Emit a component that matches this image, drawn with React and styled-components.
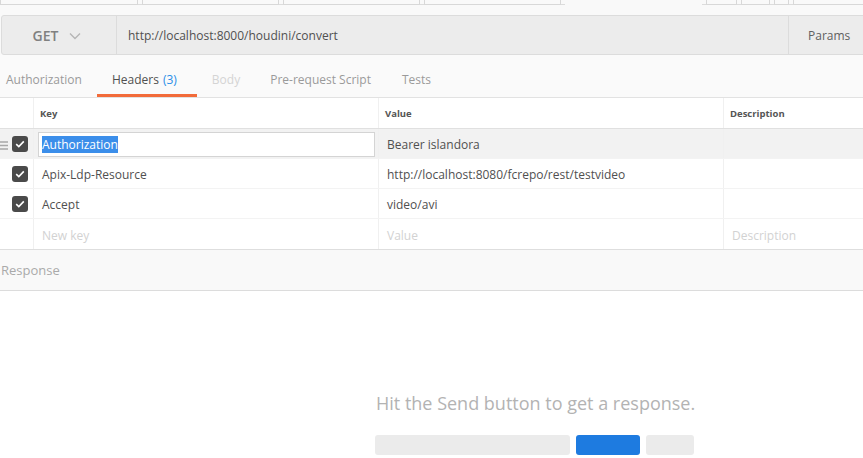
import React from "react";
import styled, { createGlobalStyle } from "styled-components";

const Global = createGlobalStyle`
  html, body { margin: 0; padding: 0; background: #fff; overflow: hidden; }
  body { font-family: "Open Sans", "Liberation Sans", sans-serif; }
`;

const topTabs = [
  { w: 138 }, { w: 137 }, { w: 137 }, { w: 137 }, { w: 137, active: true },
  { w: 31 }, { w: 29 }, { w: 15 }, { w: 90 },
];

const headers = [
  { key: "Authorization", value: "Bearer islandora", editing: true },
  { key: "Apix-Ldp-Resource", value: "http://localhost:8080/fcrepo/rest/testvideo" },
  { key: "Accept", value: "video/avi" },
];

const CheckIcon = () => (
  <svg width="10" height="8" viewBox="0 0 10 8">
    <path d="M1.2 4.2 L3.8 6.6 L8.8 1.4" fill="none" stroke="#fff" strokeWidth="1.6" />
  </svg>
);

const GripIcon = () => (
  <svg width="8" height="9" viewBox="0 0 8 9">
    <path d="M0 1h8M0 4.5h8M0 8h8" stroke="#a8a8a8" strokeWidth="1.4" />
  </svg>
);

const App = () => {
  return (
    <Page>
      <Global />
      <TopStrip>
        {topTabs.map((t, i) => (
          <TopTab key={i} $active={t.active} style={{ width: t.w }} />
        ))}
      </TopStrip>

      <UrlRow>
        <UrlBar>
          <Method>
            GET
            <svg width="12" height="8" viewBox="0 0 12 8">
              <path d="M1 1.5 L6 6.5 L11 1.5" fill="none" stroke="#b5b5b5" strokeWidth="1.4" />
            </svg>
          </Method>
          <UrlText>http://localhost:8000/houdini/convert</UrlText>
          <ParamsBtn>Params</ParamsBtn>
        </UrlBar>
      </UrlRow>

      <Tabs>
        <Tab>Authorization</Tab>
        <Tab $active>Headers <Count>(3)</Count></Tab>
        <Tab $muted>Body</Tab>
        <Tab>Pre-request Script</Tab>
        <Tab>Tests</Tab>
      </Tabs>

      <Table>
        <Row $head>
          <HandleCell />
          <HeadCell>Key</HeadCell>
          <HeadCell>Value</HeadCell>
          <HeadCell>Description</HeadCell>
        </Row>
        {headers.map((h) => (
          <Row key={h.key} $hover={h.editing}>
            <HandleCell>
              {h.editing && <Grip><GripIcon /></Grip>}
              <Check><CheckIcon /></Check>
            </HandleCell>
            <Cell>
              {h.editing ? (
                <EditBox><Selected>{h.key}</Selected></EditBox>
              ) : (
                h.key
              )}
            </Cell>
            <Cell>{h.value}</Cell>
            <Cell />
          </Row>
        ))}
        <Row>
          <HandleCell />
          <Cell $placeholder>New key</Cell>
          <Cell $placeholder>Value</Cell>
          <Cell $placeholder>Description</Cell>
        </Row>
      </Table>

      <ResponseBar>Response</ResponseBar>

      <Empty>
        <Hint>Hit the Send button to get a response.</Hint>
        <Skeleton>
          <Bar $w={195} />
          <Bar $w={64} $blue />
          <Bar $w={48} />
        </Skeleton>
      </Empty>
    </Page>
  );
};

export default App;

const Page = styled.div`
  width: 863px;
  height: 458px;
  background: #fff;
  overflow: hidden;
`;

const TopStrip = styled.div`
  display: flex;
  gap: 4px;
  height: 5px;
  background: #f9f9f9;
  box-shadow: inset 0 -1px 0 #dcdcdc;
`;

const TopTab = styled.div`
  flex: none;
  height: 5px;
  box-sizing: border-box;
  border-left: 1px solid #d8d8d8;
  border-right: 1px solid #d8d8d8;
  border-bottom: 1px solid #d8d8d8;
  background: #f9f9f9;
  ${(p) => p.$active && `border-color: transparent; background: #f9f9f9;`}
`;

const UrlRow = styled.div`
  background: #f9f9f9;
  padding: 10px 0 0 1px;
`;

const UrlBar = styled.div`
  display: flex;
  align-items: stretch;
  height: 38px;
  width: 900px;
  border: 1px solid #dcdcdc;
  border-radius: 3px 0 0 3px;
  background: #ececec;
`;

const Method = styled.div`
  width: 115px;
  display: flex;
  align-items: center;
  justify-content: center;
  gap: 11px;
  border-right: 1px solid #dcdcdc;
  font-size: 14px;
  font-weight: 600;
  color: #808080;
  padding-right: 4px;
  box-sizing: border-box;
  svg { margin-top: 1px; }
`;

const UrlText = styled.div`
  flex: 1;
  display: flex;
  align-items: center;
  padding-left: 11px;
  font-size: 12px;
  color: #505050;
`;

const ParamsBtn = styled.div`
  width: 114px;
  display: flex;
  align-items: center;
  padding-left: 19px;
  box-sizing: border-box;
  border-left: 1px solid #dcdcdc;
  font-size: 12px;
  color: #606060;
`;

const Tabs = styled.div`
  display: flex;
  height: 42px;
  background: #fafafa;
  border-bottom: 1px solid #e2e2e2;
  padding-left: 6px;
`;

const Tab = styled.div`
  display: flex;
  align-items: center;
  font-size: 12px;
  padding: 7px 15px 0 15px;
  color: ${(p) => (p.$muted ? "#d4d4d4" : p.$active ? "#505050" : "#9a9a9a")};
  box-shadow: ${(p) => (p.$active ? "inset 0 -3px 0 #f26b3a" : "none")};
  &:first-child { padding-left: 0; }
  &:nth-child(2) { padding-right: 20px; }
  &:last-child { padding-left: 16px; }
`;

const Count = styled.span`
  color: #2a8ee8;
  margin-left: 4px;
`;

const Table = styled.div`
  border-bottom: 1px solid #dedede;
`;

const Row = styled.div`
  display: grid;
  grid-template-columns: 33px 345px 345px 1fr;
  height: ${(p) => (p.$head ? "31px" : "30px")};
  background: ${(p) => (p.$hover ? "#f2f2f2" : "#fff")};
  border-bottom: 1px solid ${(p) => (p.$head ? "#e0e0e0" : "#f3f3f3")};
  box-sizing: border-box;
  &:last-child { border-bottom: none; }
`;

const HandleCell = styled.div`
  display: flex;
  align-items: center;
  position: relative;
  padding: 1px 0 0 12px;
`;

const Grip = styled.span`
  position: absolute;
  left: 0;
  top: 12px;
  display: flex;
`;

const Check = styled.span`
  width: 16px;
  height: 16px;
  border-radius: 3px;
  background: #4a4a4a;
  display: flex;
  align-items: center;
  justify-content: center;
`;

const HeadCell = styled.div`
  display: flex;
  align-items: center;
  padding-left: 6px;
  font-size: 9.5px;
  font-weight: 700;
  color: #555;
  border-left: 1px solid #f0f0f0;
`;

const Cell = styled.div`
  display: flex;
  align-items: center;
  padding: 2px 0 0 8px;
  font-size: 12px;
  color: ${(p) => (p.$placeholder ? "#d2d2d2" : "#505050")};
  border-left: 1px solid #f0f0f0;
`;

const EditBox = styled.div`
  margin: 0 0 1px -4px;
  width: 337px;
  height: 25px;
  box-sizing: border-box;
  border: 1px solid #d4d4d4;
  background: #fff;
  display: flex;
  align-items: center;
  padding-left: 3px;
`;

const Selected = styled.span`
  background: #3b8eea;
  color: #fff;
  line-height: 17px;
`;

const ResponseBar = styled.div`
  height: 40px;
  display: flex;
  align-items: center;
  padding-left: 1px;
  background: #f9f9f9;
  border-bottom: 1px solid #dcdcdc;
  font-size: 13px;
  color: #aaa;
`;

const Empty = styled.div`
  display: flex;
  flex-direction: column;
  align-items: flex-start;
  padding: 100px 0 0 375px;
`;

const Hint = styled.div`
  font-size: 18px;
  color: #b3b3b3;
  margin-left: 1px;
`;

const Skeleton = styled.div`
  display: flex;
  gap: 6px;
  margin-top: 20px;
`;

const Bar = styled.div`
  width: ${(p) => p.$w}px;
  height: 20px;
  border-radius: 3px;
  background: ${(p) => (p.$blue ? "#1e7be0" : "#ebebeb")};
`;
